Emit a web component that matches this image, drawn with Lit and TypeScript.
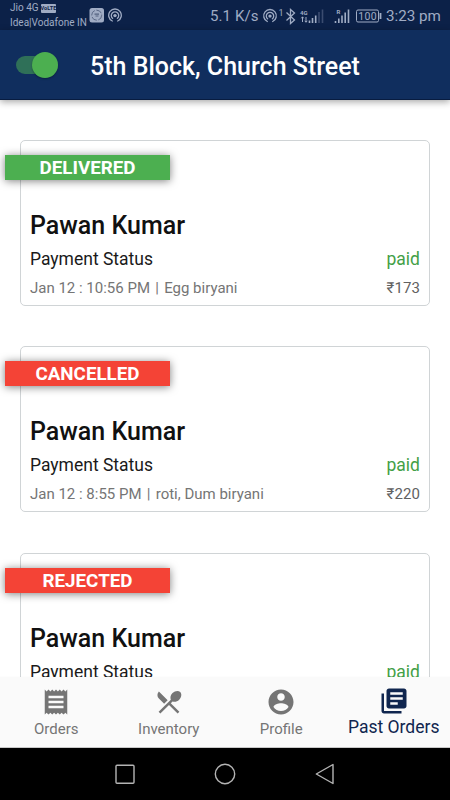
import { LitElement, html, css, svg } from "lit";
import { customElement, property } from "lit/decorators.js";

@customElement("status-bar")
class StatusBar extends LitElement {
  static styles = css`
    :host { display: flex; justify-content: space-between; height: 30px; background: #0c2148; color: #a0acc4; font-family: Roboto, sans-serif; }
    .left, .right { display: flex; align-items: center; }
    .left { padding-left: 10px; align-items: flex-start; }
    .carriers { display: flex; flex-direction: column; width: 78px; font-size: 10px; line-height: 14.5px; padding-top: 1px; white-space: nowrap; }
    .line { display: flex; align-items: center; }
    .volte { background: #a0acc4; color: #0c2148; font-size: 5.6px; font-weight: 700; line-height: 9.5px; height: 9px; width: 15px; text-align: center; border-radius: 1px; margin-left: 2px; }
    svg { display: block; }
    .icons { padding-top: 7px; display: flex; gap: 4px; }
    .icons svg + svg { margin-top: 1px; }
    .right { padding-right: 10px; padding-top: 1px; height: 29px; }
    .speed { font-size: 15px; letter-spacing: 0.1px; width: 52px; white-space: nowrap; }
    .clock { font-size: 15.2px; margin-left: 4px; width: 54px; white-space: nowrap; }
    .tiny { font-size: 6px; font-weight: 700; }
    .sup { font-size: 9px; }
    .num { font-size: 10.5px; }
  `;
  render() {
    const cast = svg`<g fill="none" stroke="#a0acc4" stroke-width="1.3" stroke-linecap="round">
      <path d="M4.300 13A6.300 6.300 0 1 1 9.700 13"/><path d="M4.600 10.300A3.700 3.700 0 1 1 9.400 10.300"/></g>
      <circle cx="7" cy="7.600" r="1.700" fill="#a0acc4"/>`;
    return html`
      <div class="left">
        <div class="carriers">
          <div class="line">Jio 4G<span class="volte">VoLTE</span></div>
          <div>Idea|Vodafone IN</div>
        </div>
        <div class="icons">
          <svg width="16" height="16" viewBox="0 0 16 16">
            <rect x="1.500" y="1" width="14.500" height="14.500" rx="2.500" fill="#a0acc4"/>
            <circle cx="8.700" cy="8.200" r="5" fill="none" stroke="#53617f" stroke-width=".9" stroke-dasharray="6 1.500"/>
            <path d="M6.500 7.200h4.500M7.500 9h3" stroke="#53617f" stroke-width="1.200"/>
          </svg>
          <svg width="15" height="15" viewBox="0 0 15 15">${cast}</svg>
        </div>
      </div>
      <div class="right">
        <span class="speed">5.1 K/s</span>
        <svg width="120" height="30" viewBox="0 0 120 30">
          <g transform="translate(1 7.500)">${cast}</g>
          <text class="sup" x="16.500" y="14.500" fill="#a0acc4">1</text>
          <path d="M24.500 11.500l8 7.500-4 3.500v-14l4 3.500-8 7.500" fill="none" stroke="#a0acc4" stroke-width="1.300"/>
          <text class="tiny" x="38" y="13.500" fill="#a0acc4">4G</text>
          <path d="M40.500 16v5M39.300 17.300l1.200-1.500 1.200 1.500M44 16v5M42.800 19.800l1.200 1.500 1.200-1.500" stroke="#a0acc4" fill="none"/>
          <path d="M47.500 22v-2.500M50.500 22v-5M53.700 22v-7.500" stroke="#a0acc4" stroke-width="1.600"/>
          <path d="M57 22V11M60.500 22V8.500" stroke="#3b4c70" stroke-width="1.600"/>
          <text class="tiny" x="74.500" y="13" fill="#a0acc4">R</text>
          <path d="M73.500 22v-2M76.800 22v-4.500M80 22v-7.500M83.200 22V11.500M86.500 22V8.500" stroke="#a0acc4" stroke-width="1.600"/>
          <rect x="94.500" y="9" width="22" height="12" rx="1.500" fill="none" stroke="#a0acc4"/>
          <path d="M118.500 12v6" stroke="#a0acc4" stroke-width="1.800"/>
          <text class="num" x="96.200" y="18.800" fill="#a0acc4" textLength="18.500">100</text>
        </svg>
        <span class="clock">3:23 pm</span>
      </div>`;
  }
}

@customElement("order-card")
class OrderCard extends LitElement {
  @property() status = "";
  @property() tone = "red";
  @property() time = "";
  @property() items = "";
  @property() price = "";
  static styles = css`
    :host { display: block; box-sizing: border-box; flex: none; height: 166px; border: 1.250px solid #d0d4d6; border-radius: 5px; background: #fff; padding: 14px 9px 0; font-family: Roboto, sans-serif; }
    .ribbon { box-sizing: border-box; width: 165px; height: 25px; padding-top: 1px; margin-left: -25px; color: #fff; font-size: 18.800px; font-weight: 700; line-height: 25px; text-align: center; box-shadow: 0 1px 8px rgba(0,0,0,.5); }
    .green { background: #4caf50; }
    .red { background: #f44336; }
    .name { margin-top: 31px; font-size: 25px; font-weight: 500; line-height: 30px; color: #111; }
    .row { display: flex; justify-content: space-between; white-space: nowrap; }
    .pay { margin-top: 7px; font-size: 17.500px; line-height: 22px; color: #1a1a1a; }
    .paid { color: #43a047; }
    .small { margin-top: 8px; font-size: 15px; line-height: 20px; color: #757575; }
    .sep { margin: 0 1.500px; }
    .price { color: #616161; letter-spacing: .1px; }
  `;
  render() {
    return html`
      <div class="ribbon ${this.tone}">${this.status}</div>
      <div class="name">Pawan Kumar</div>
      <div class="row pay"><span>Payment Status</span><span class="paid">paid</span></div>
      ${this.time ? html`<div class="row small"><span>${this.time} <span class="sep">|</span> ${this.items}</span><span class="price">${this.price}</span></div>` : ""}`;
  }
}

const icons = {
  orders: "M18 17H6v-2h12v2zm0-4H6v-2h12v2zm0-4H6V7h12v2zM3 22l1.500-1.500L6 22l1.500-1.500L9 22l1.500-1.500L12 22l1.500-1.500L15 22l1.500-1.500L18 22l1.500-1.500L21 22V2l-1.500 1.500L18 2l-1.500 1.500L15 2l-1.500 1.500L12 2l-1.500 1.500L9 2 7.500 3.500 6 2 4.500 3.500 3 2v20z",
  inventory: "M8.100 13.340l2.830-2.830L3.910 3.500c-1.560 1.560-1.560 4.090 0 5.660l4.190 4.180zm6.780-1.810c1.530.71 3.680.21 5.270-1.380 1.910-1.910 2.280-4.650.81-6.120-1.460-1.460-4.200-1.100-6.120.81-1.590 1.590-2.090 3.740-1.380 5.270L3.700 19.870l1.410 1.410L12 14.410l6.880 6.880 1.410-1.410L13.410 13l1.470-1.470z",
  profile: "M12 2C6.480 2 2 6.480 2 12s4.480 10 10 10 10-4.480 10-10S17.520 2 12 2zm0 3c1.660 0 3 1.340 3 3s-1.340 3-3 3-3-1.340-3-3 1.340-3 3-3zm0 14.200c-2.500 0-4.710-1.280-6-3.220.03-1.990 4-3.080 6-3.080 1.990 0 5.970 1.090 6 3.080-1.290 1.940-3.500 3.220-6 3.220z",
  past: "M4 6H2v14c0 1.100.9 2 2 2h14v-2H4V6zm16-4H8c-1.100 0-2 .9-2 2v12c0 1.100.9 2 2 2h12c1.100 0 2-.9 2-2V4c0-1.100-.9-2-2-2zm-1 9H9V9h10v2zm-4 4H9v-2h6v2zm4-8H9V5h10v2z",
};

@customElement("app-root")
class AppRoot extends LitElement {
  static styles = css`
    :host { display: flex; flex-direction: column; width: 450px; height: 800px; overflow: hidden; background: #fff; font-family: Roboto, sans-serif; }
    .bar { flex: none; position: relative; z-index: 1; display: flex; align-items: center; height: 70px; box-sizing: border-box; padding: 3px 0 0 16px; background: #102e5e; border-bottom: 1px solid #081c40; box-shadow: 0 2px 7px rgba(0,0,0,.35); }
    .switch { display: flex; align-items: center; justify-content: flex-end; width: 42px; height: 18px; margin-top: -3px; border-radius: 9px; background: #2f7058; }
    .knob { flex: none; width: 26px; height: 26px; border-radius: 50%; background: #4caf50; box-shadow: 0 1px 2px rgba(0,0,0,.3); }
    .title { margin-left: 32px; font-size: 25px; font-weight: 500; color: #fff; white-space: nowrap; }
    .list { flex: 1; min-height: 0; display: flex; flex-direction: column; gap: 40.300px; padding: 40px 20px 0; overflow: hidden; }
    .tabs { flex: none; display: grid; grid-template-columns: repeat(4, 1fr); height: 71px; box-sizing: border-box; background: #fafafa; border-bottom: 1px solid #c8c8c8; box-shadow: 0 0 1px rgba(0,0,0,.06); }
    .tab { display: flex; flex-direction: column; align-items: center; padding-top: 10px; font-size: 15px; line-height: 20px; color: #757575; white-space: nowrap; }
    .tab svg { display: block; width: 30px; height: 30px; fill: currentColor; margin-bottom: 2px; }
    .active { padding-top: 9px; font-size: 17.500px; color: #10264f; }
    .active svg { margin-bottom: 1px; }
    .sys { flex: none; height: 52px; background: #000; }
    .sys svg { display: block; fill: none; stroke: #b4b4b4; stroke-width: 1.400; }
  `;
  tab(path: string, label: string, active = false) {
    return html`<div class="tab ${active ? "active" : ""}"><svg viewBox="0 0 24 24"><path d=${path}></path></svg><span>${label}</span></div>`;
  }
  render() {
    return html`
      <status-bar></status-bar>
      <div class="bar"><div class="switch"><div class="knob"></div></div><div class="title">5th Block, Church Street</div></div>
      <div class="list">
        <order-card status="DELIVERED" tone="green" time="Jan 12 : 10:56 PM" items="Egg biryani" price="₹173"></order-card>
        <order-card status="CANCELLED" time="Jan 12 : 8:55 PM" items="roti, Dum biryani" price="₹220"></order-card>
        <order-card status="REJECTED"></order-card>
      </div>
      <div class="tabs">
        ${this.tab(icons.orders, "Orders")}${this.tab(icons.inventory, "Inventory")}${this.tab(icons.profile, "Profile")}${this.tab(icons.past, "Past Orders", true)}
      </div>
      <div class="sys"><svg width="450" height="52" viewBox="0 0 450 52">
        <rect x="116" y="17.200" width="18" height="18" rx="1"/>
        <circle cx="225" cy="26" r="9.700"/>
        <path d="M333 16.500v19l-16.700-9.500z" stroke-linejoin="round"/>
      </svg></div>`;
  }
}
